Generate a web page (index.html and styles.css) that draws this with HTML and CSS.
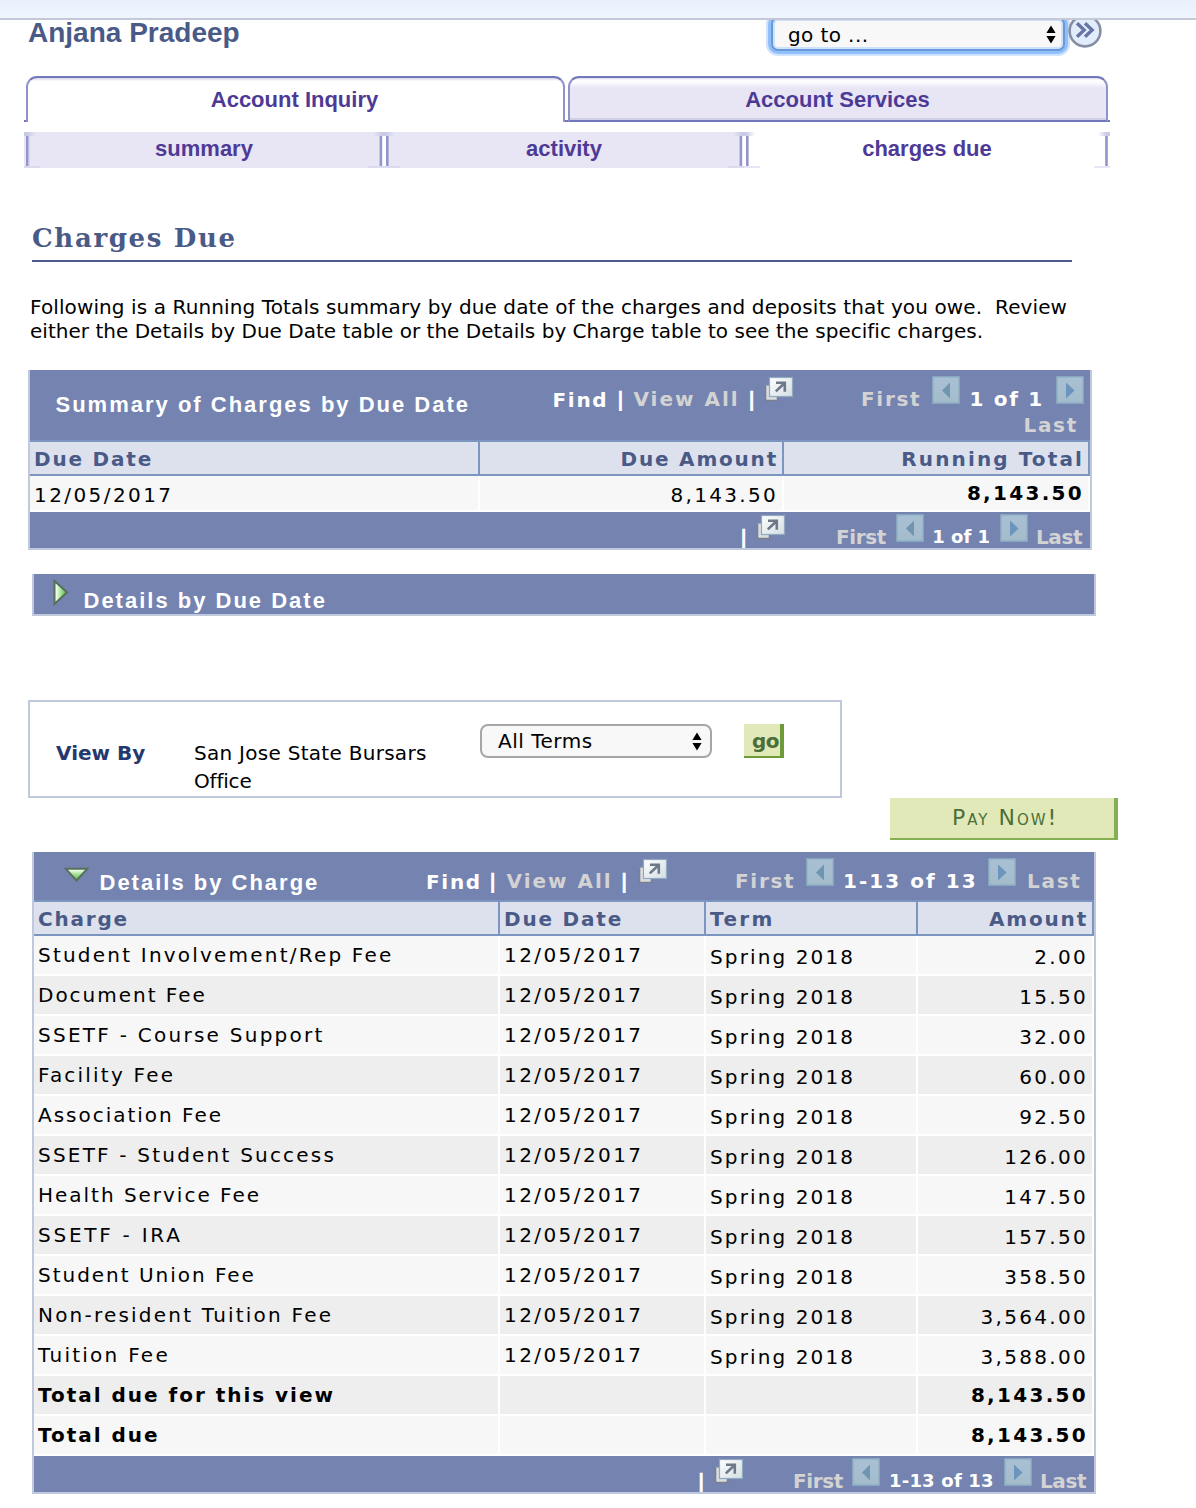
FILE: index.html
```html
<!DOCTYPE html>
<html lang="en">
<head>
<meta charset="utf-8">
<title>Account Inquiry - Charges Due</title>
<link rel="stylesheet" href="styles.css">
</head>
<body>
<svg class="defs" width="0" height="0" aria-hidden="true">
  <defs>
    <linearGradient id="paper" x1="0" y1="0" x2="1" y2="1"><stop offset="0" stop-color="#fff"/><stop offset="1" stop-color="#d3dde2"/></linearGradient>
    <linearGradient id="glass" x1="0" y1="0" x2="0" y2="1"><stop offset="0" stop-color="#a9c0d4"/><stop offset="1" stop-color="#a3bccb"/></linearGradient>
    <linearGradient id="leafRight" x1="0" y1="0" x2="1" y2="0"><stop offset="0.15" stop-color="#f2fbef"/><stop offset="0.5" stop-color="#a5e596"/><stop offset="1" stop-color="#58b04a"/></linearGradient>
    <linearGradient id="leafDown" x1="0" y1="0" x2="0" y2="1"><stop offset="0.1" stop-color="#f2fbef"/><stop offset="0.45" stop-color="#a5e596"/><stop offset="1" stop-color="#58b04a"/></linearGradient>
    <linearGradient id="capLeft" x1="0" x2="1"><stop offset="0.3" stop-color="#c9cae6"/><stop offset="1" stop-color="#c9cae6" stop-opacity="0"/></linearGradient>
    <linearGradient id="capRight" x1="1" x2="0"><stop offset="0.3" stop-color="#c9cae6"/><stop offset="1" stop-color="#c9cae6" stop-opacity="0"/></linearGradient>
    <linearGradient id="capBoth"><stop offset="0" stop-color="#c9cae6" stop-opacity="0"/><stop offset="0.4" stop-color="#c9cae6"/><stop offset="0.6" stop-color="#c9cae6"/><stop offset="1" stop-color="#c9cae6" stop-opacity="0"/></linearGradient>
    <symbol id="popup" viewBox="0 0 30 27">
      <rect x="1.5" y="9.5" width="12" height="15" fill="#d9dde0" stroke="#a5abb5" stroke-width="1"/>
      <path d="M1.5 9.5V24.5H13.5V20" fill="none" stroke="#7b818c" stroke-width="1.6"/>
      <rect x="5.5" y="1.5" width="23" height="19" fill="url(#paper)" stroke="#8fa9bf" stroke-width="1.2"/>
      <path d="M12 6.8h8.8v9M20.4 7.2L11.8 15.4" fill="none" stroke="#6d7988" stroke-width="2.6"/>
    </symbol>
    <symbol id="prev" viewBox="0 0 28 28">
      <rect x="0.7" y="0.7" width="26.6" height="26.6" fill="url(#glass)" stroke="#85a6be" stroke-width="1.4"/>
      <path d="M18 6.5v16L10 14.5z" fill="#7095ae"/>
    </symbol>
    <symbol id="next" viewBox="0 0 28 28">
      <rect x="0.7" y="0.7" width="26.6" height="26.6" fill="url(#glass)" stroke="#85a6be" stroke-width="1.4"/>
      <path d="M10 6.5v16l8.5-8z" fill="#6b95bc"/>
    </symbol>
    <symbol id="updown" viewBox="0 0 10 19">
      <path d="M5 0.5L9.6 8H0.4zM5 18.5L9.6 11H0.4z" fill="#000"/>
    </symbol>
  </defs>
</svg>

<div class="topbar"></div>

<header class="head">
  <div class="name">Anjana Pradeep</div>
  <div class="goto"><span>go to ...</span><svg width="10" height="19"><use href="#updown"/></svg></div>
  <svg class="round" width="34" height="34" viewBox="0 0 34 34">
    <circle cx="17" cy="17" r="15.4" fill="#e1edfa" stroke="#868ea3" stroke-width="2.6"/>
    <path d="M9 9.2l7.2 6.8L9 22.800M17 9.200l7.200 6.800-7.200 6.800" fill="none" stroke="#6674a6" stroke-width="3.300"/>
  </svg>
</header>

<nav class="tabs">
  <span class="foot"></span>
  <a class="tab active">Account Inquiry</a>
  <span class="gap"></span>
  <a class="tab">Account Services</a>
  <span class="foot"></span>
</nav>

<nav class="subtabs">
  <svg class="lilac" width="16" height="36"><rect width="12" height="4" fill="url(#capLeft)"/><rect x="2" y="4" width="2.6" height="30" fill="#9294cb"/><rect x="4.6" y="4" width="1" height="30" fill="#cfceea"/><rect y="34" width="16" height="2" fill="#dddaf0"/></svg>
  <a class="subtab">summary</a>
  <svg class="lilac" width="32" height="36"><rect x="14" y="4" width="4" height="30" fill="#fff"/><rect x="5" width="22" height="4" fill="url(#capBoth)"/><rect x="11.6" y="4" width="2.6" height="30" fill="#9294cb"/><rect x="18" y="4" width="2.6" height="30" fill="#9294cb"/><rect y="34" width="32" height="2" fill="#dddaf0"/></svg>
  <a class="subtab">activity</a>
  <svg width="32" height="36"><rect width="14" height="36" fill="#e8e6f5"/><rect x="5" width="22" height="4" fill="url(#capBoth)"/><rect x="11.6" y="4" width="2.6" height="30" fill="#9294cb"/><rect x="18" y="4" width="2.6" height="30" fill="#9294cb"/><rect y="34" width="16" height="2" fill="#dddaf0"/><rect x="16" y="34" width="16" height="2" fill="#e8e6f5"/></svg>
  <a class="subtab open">charges due</a>
  <svg width="16" height="36"><rect x="4" width="12" height="4" fill="url(#capRight)"/><rect x="11.2" y="4" width="2.6" height="30" fill="#9294cb"/><rect y="34" width="16" height="2" fill="#e8e6f5"/></svg>
</nav>

<main>
  <h1>Charges Due</h1>
  <p class="intro"><span class="line first">Following is a Running Totals summary by due date of the charges and deposits that you owe.&nbsp; Review</span> <span class="line">either the Details by Due Date table or the Details by Charge table to see the specific charges.</span></p>

  <section class="panel summary">
    <div class="bar summary-bar">
      <h2>Summary of Charges by Due Date</h2>
      <a class="find">Find</a><span class="pipe">|</span><span class="dim all">View All</span><span class="pipe">|</span>
      <svg width="30" height="27"><use href="#popup"/></svg>
      <span class="dim">First</span><svg width="28" height="28"><use href="#prev"/></svg><span>1 of 1</span><svg width="28" height="28"><use href="#next"/></svg>
      <span class="dim last">Last</span>
    </div>
    <table>
      <colgroup><col class="s1"><col class="s2"><col class="s3"></colgroup>
      <tr><th>Due Date</th><th class="r">Due Amount</th><th class="r wide">Running Total</th></tr>
      <tr class="short"><td class="date">12/05/2017</td><td class="r">8,143.50</td><td class="r strong raised">8,143.50</td></tr>
    </table>
    <div class="bar pager summary-pager">
      <span class="pipe">|</span><svg width="30" height="27"><use href="#popup"/></svg>
      <span class="dim">First</span><svg width="28" height="28"><use href="#prev"/></svg><span class="count">1 of 1</span><svg width="28" height="28"><use href="#next"/></svg><span class="dim">Last</span>
    </div>
  </section>

  <section class="panel collapsed">
    <svg width="16" height="27" viewBox="0 0 16 27"><path d="M1.5 2L14 13.2 1.5 25z" fill="url(#leafRight)" stroke="#56705a" stroke-width="2"/></svg>
    <h2>Details by Due Date</h2>
  </section>

  <section class="viewby">
    <b>View By</b>
    <div class="school">San Jose State Bursars<br><span class="office">Office</span></div>
    <div class="select"><span>All Terms</span><svg width="10" height="19"><use href="#updown"/></svg></div>
    <a class="go">go</a>
  </section>

  <a class="pay">Pay Now!</a>

  <section class="panel details">
    <div class="bar details-bar">
      <div class="title"><svg width="26" height="17" viewBox="0 0 26 17"><path d="M1.8 1.8h21.4L12.5 13.5z" fill="url(#leafDown)" stroke="#56705a" stroke-width="2"/></svg><h2>Details by Charge</h2></div>
      <a class="find">Find</a><span class="pipe">|</span><span class="dim all">View All</span><span class="pipe">|</span>
      <svg width="30" height="27"><use href="#popup"/></svg>
      <span class="dim">First</span><svg width="28" height="28"><use href="#prev"/></svg><span class="range">1-13 of 13</span><svg width="28" height="28"><use href="#next"/></svg><span class="dim">Last</span>
    </div>
    <table>
      <colgroup><col class="d1"><col class="d2"><col class="d3"><col class="d4"></colgroup>
      <tr><th>Charge</th><th>Due Date</th><th class="term">Term</th><th class="r">Amount</th></tr>
      <tr><td>Student Involvement/Rep Fee</td><td class="date">12/05/2017</td><td class="low">Spring 2018</td><td class="r low">2.00</td></tr>
      <tr><td class="tight">Document Fee</td><td class="date">12/05/2017</td><td class="low">Spring 2018</td><td class="r low">15.50</td></tr>
      <tr><td class="loose">SSETF - Course Support</td><td class="date">12/05/2017</td><td class="low">Spring 2018</td><td class="r low">32.00</td></tr>
      <tr><td>Facility Fee</td><td class="date">12/05/2017</td><td class="low">Spring 2018</td><td class="r low">60.00</td></tr>
      <tr><td class="tight">Association Fee</td><td class="date">12/05/2017</td><td class="low">Spring 2018</td><td class="r low">92.50</td></tr>
      <tr><td>SSETF - Student Success</td><td class="date">12/05/2017</td><td class="low">Spring 2018</td><td class="r low">126.00</td></tr>
      <tr><td class="tight">Health Service Fee</td><td class="date">12/05/2017</td><td class="low">Spring 2018</td><td class="r low">147.50</td></tr>
      <tr><td class="loosest">SSETF - IRA</td><td class="date">12/05/2017</td><td class="low">Spring 2018</td><td class="r low">157.50</td></tr>
      <tr><td class="tight">Student Union Fee</td><td class="date">12/05/2017</td><td class="low">Spring 2018</td><td class="r low">358.50</td></tr>
      <tr><td>Non-resident Tuition Fee</td><td class="date">12/05/2017</td><td class="low">Spring 2018</td><td class="r low">3,564.00</td></tr>
      <tr><td class="loose">Tuition Fee</td><td class="date">12/05/2017</td><td class="low">Spring 2018</td><td class="r low">3,588.00</td></tr>
      <tr><td class="strong tight">Total due for this view</td><td></td><td></td><td class="r strong">8,143.50</td></tr>
      <tr><td class="strong tight">Total due</td><td></td><td></td><td class="r strong">8,143.50</td></tr>
    </table>
    <div class="bar pager details-pager">
      <span class="pipe">|</span><svg width="30" height="27"><use href="#popup"/></svg>
      <span class="dim">First</span><svg width="28" height="28"><use href="#prev"/></svg><span class="count range">1-13 of 13</span><svg width="28" height="28"><use href="#next"/></svg><span class="dim">Last</span>
    </div>
  </section>
</main>
</body>
</html>
```
FILE: styles.css
```css
* { box-sizing: border-box; }
body {
  margin: 0;
  width: 1196px;
  height: 1508px;
  overflow: hidden;
  background: #fff;
  color: #000;
  font: 20px/24px "DejaVu Sans", sans-serif;
}
svg { display: block; flex: none; }
.defs { height: 0; }
h1, h2, p { margin: 0; }
a, span, td, th, b, h2 { white-space: nowrap; }

/* Sits above the page header, whose controls slide under it */
.topbar {
  position: relative;
  z-index: 1;
  height: 20px;
  background: linear-gradient(#e8f0fb, #eef5fd);
  border-bottom: 2px solid #c5c8d8;
}

/* Greeting and quick navigation */
.head {
  display: flex;
  align-items: flex-start;
  height: 56px;
  padding-left: 28px;
}
.name {
  width: 743px;
  margin-top: -3px;
  font: bold 28px/32px "Liberation Sans", sans-serif;
  color: #4a5a87;
}
.goto {
  display: flex;
  justify-content: space-between;
  width: 294px;
  height: 34px;
  margin-top: -3px;
  padding: 6px 7px 0 15px;
  border: 2px solid #6899d9;
  border-radius: 7px;
  background: #f8f8f8;
  box-shadow: inset 0 0 0 2px #cfe2fb, 0 0 0 3px #92bffa, 0 0 0 5px #d0e3fc;
  letter-spacing: 0.4px;
}
.goto span { margin-top: -2px; }
.goto svg { margin-top: 0; }
.round { margin: -6px 0 0 3px; }

/* Main tabs */
.tabs {
  display: flex;
  height: 46px;
  padding-left: 24px;
  font: bold 22px/24px "Liberation Sans", sans-serif;
  text-align: center;
  color: #4e3a96;
}
.foot, .gap { align-self: flex-end; height: 2px; background: #7276ba; }
.foot { width: 2px; }
.gap { width: 3px; }
.tab {
  width: 540px;
  padding: 10px 1px 0 0;
  border: 2.5px solid #9093cb;
  border-top: 2px solid #7478bb;
  border-bottom: 2px solid #7276ba;
  border-radius: 11px 11px 0 0;
  background: linear-gradient(#d5d6eb 0, #fff 2px, #fdfdff 4px, #e8e6f5 10px);
  box-shadow: inset 0 -2px 0 #d0cfe8;
}
.tab.active {
  width: 539px;
  padding-right: 2px;
  border-bottom: 0;
  background: linear-gradient(#d5d6eb 0, #fff 3px);
  box-shadow: none;
}

.subtabs {
  display: flex;
  height: 36px;
  margin: 10px 0 0 24px;
  font: bold 22px/24px "Liberation Sans", sans-serif;
  text-align: center;
  color: #4e3a96;
}
.lilac, .subtab { background: #e8e6f5; }
.subtab { width: 328px; padding-top: 5px; }
.subtab.open { width: 334px; background: #fff; }

main { display: flow-root; }
h1 {
  width: 1040px;
  height: 38px;
  margin: 56px 0 0 32px;
  border-bottom: 2px solid #4c5b8c;
  font: bold 26px/28px "DejaVu Serif", serif;
  letter-spacing: 1.65px;
  color: #4a5a87;
}
.intro { margin: 33px 0 0 30px; letter-spacing: 0.02px; }
.line { display: block; }
.line.first { letter-spacing: 0.11px; }

/* Grid panels */
.panel {
  width: 1064px;
  border: 2px solid #c0c9db;
  border-top: 0;
  background: #7583b0;
}
.summary { margin: 27px 0 0 28px; }
.details { margin: 12px 0 0 32px; }
h2 {
  font: bold 22px/24px "Liberation Sans", sans-serif;
  letter-spacing: 2px;
  color: #fff;
}
.bar {
  display: grid;
  align-items: start;
  overflow: hidden;
  font-weight: bold;
  letter-spacing: 1.7px;
  color: #fff;
}
.bar > span { margin-top: 17px; }
.bar > .find { margin-top: 18px; }
.bar > svg { margin-top: 6px; }
.bar .pipe { letter-spacing: 0; -webkit-text-stroke: 0.6px #fff; }
.dim { color: #d3d3d3; }
.all { letter-spacing: 2px; }
.summary-bar {
  height: 70px;
  grid-template-columns: 522.5px 64.2px 16.8px 114.4px 16.1px 97px 71px 37.5px 86.5px 34px;
  grid-template-rows: 43px 27px;
}
.summary-bar h2 { margin: 23px 0 0 25.5px; }
.bar > .last { grid-column: 1 / -1; justify-self: end; margin: 0 12px 0 0; }
.details-bar {
  height: 48px;
  grid-template-columns: 392px 63px 17.5px 114px 17.5px 97px 71px 37px 145px 39px 67px;
}
.title { display: flex; padding-left: 30px; }
.title svg { margin-top: 15px; }
.title h2 { margin: 19px 0 0 9.5px; }

.pager { height: 36px; letter-spacing: -0.4px; }
.bar.pager > span { margin-top: 13px; }
.bar.pager > svg { margin-top: 2px; }
.count { font-size: 18px; letter-spacing: 0; }
.details-bar .range { letter-spacing: 2.05px; }
.details-pager .range { letter-spacing: 0.2px; }
.summary-pager { padding-left: 710px; grid-template-columns: 16px 80px 60px 36.3px 67.7px 36px 54px; }
.details-pager { padding-left: 663.5px; grid-template-columns: 16.5px 79px 59px 37px 115px 36px 54px; }

table {
  width: 1060px;
  table-layout: fixed;
  border-spacing: 0;
  background: #fff;
}
.s1 { width: 450px; } .s2 { width: 304px; } .s3 { width: 306px; }
.d1 { width: 466px; } .d2 { width: 206px; } .d3 { width: 212px; } .d4 { width: 176px; }
th, td {
  padding: 7px 4px 0 4px;
  vertical-align: top;
  text-align: left;
  letter-spacing: 2.21px;
}
th {
  height: 36px;
  padding-top: 5px;
  border: solid #7c96c0;
  border-width: 2px 2px 2px 0;
  background: #dce1ed;
  color: #4a5a87;
  letter-spacing: 1.8px;
}
td {
  height: 40px;
  border: solid #fff;
  border-width: 0 2px 2px 0;
  background: #f7f7f7;
}
tr:nth-child(odd) td { background: #eee; }
.short td { height: 36px; }
.r { text-align: right; }
td.r { letter-spacing: 2.3px; }
td.date { letter-spacing: 2.42px; }
td.low { padding-top: 9px; letter-spacing: 2.12px; }
td.r.low { letter-spacing: 2.3px; }
td.raised { padding-top: 5px; }
td.tight { letter-spacing: 1.98px; }
td.loose { letter-spacing: 2.26px; }
td.loosest { letter-spacing: 2.75px; }
th.wide { letter-spacing: 2.12px; }
th.term { letter-spacing: 2.4px; }
.strong { font-weight: bold; }

.collapsed {
  display: flex;
  height: 42px;
  margin: 24px 0 0 32px;
  padding: 5px 0 0 19px;
}
.collapsed h2 { margin: 10px 0 0 14.5px; }

/* Filter box */
.viewby {
  display: flex;
  align-items: flex-start;
  width: 814px;
  height: 98px;
  margin: 84px 0 0 28px;
  padding: 22px 0 0 26px;
  border: 2px solid #c0c9db;
}
.viewby b { width: 138px; margin-top: 17px; color: #26396e; }
.school { width: 286px; margin-top: 15px; line-height: 28px; letter-spacing: 0.28px; }
.office { letter-spacing: -0.2px; }
.select {
  display: flex;
  justify-content: space-between;
  width: 232px;
  height: 34px;
  padding: 3px 8px 0 16px;
  border: 2px solid #a6a6a6;
  border-radius: 8px;
  background: #f8f8f8;
  letter-spacing: 0.5px;
}
.select svg { margin-top: 3px; }
.go {
  width: 40px;
  height: 34px;
  margin-left: 32px;
  padding: 5px 0 0 8px;
  border: solid #6f9a38;
  border-width: 0 4px 2px 0;
  background: #e1e9b8;
  color: #4a6f38;
  font-weight: bold;
  letter-spacing: -0.5px;
}
.pay {
  display: block;
  width: 228px;
  height: 42px;
  margin-left: 890px;
  padding: 8px 0 0 62px;
  border: solid #82b052;
  border-width: 0 4px 2px 0;
  background: #e1e9b8;
  color: #4a6f38;
  font-size: 22px;
  font-variant: small-caps;
  letter-spacing: 2px;
}
```
